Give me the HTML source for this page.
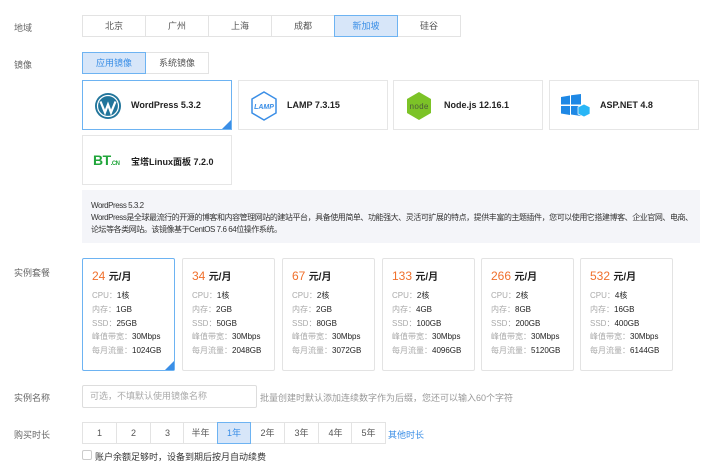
<!DOCTYPE html>
<html><head><meta charset="utf-8"><style>
*{box-sizing:border-box;margin:0;padding:0}
body{width:720px;height:466px;background:#fff;font-family:"Liberation Sans","Noto Sans CJK SC",sans-serif;font-size:9px;color:#333;position:relative;overflow:hidden}
.a{position:absolute}
.lbl{position:absolute;left:14px;color:#666;font-size:9px}
.btn{position:absolute;height:22px;border:1px solid #e3e3e3;background:#fff;text-align:center;line-height:20px;color:#555;font-size:9px}
.sel{background:#d7e6f9;border-color:#6db3f2;color:#3a8ee6;z-index:2}
.card{position:absolute;height:50px;width:150px;border:1px solid #e6e6e6;background:#fff}
.card b{position:absolute;left:48px;top:19px;font-size:9px;color:#222}
.plan{position:absolute;top:258px;width:93px;height:113px;border:1px solid #e3e3e3;border-radius:2px}
.plan .p{position:absolute;left:9px;top:9px;font-size:12px;color:#f0702c}
.plan .p span{font-size:10px;color:#222;font-weight:bold}
.plan .r{position:absolute;left:9px;font-size:8px;color:#222}
.plan .r i{font-style:normal;color:#aaa}
.corner{position:absolute;right:0;bottom:0;width:0;height:0;border-left:9px solid transparent;border-bottom:9px solid #3a8ee6}
</style></head><body>
<div class="lbl" style="top:21px">地域</div>
<div class="btn" style="left:82px;top:15px;width:64px">北京</div>
<div class="btn" style="left:145px;top:15px;width:64px">广州</div>
<div class="btn" style="left:208px;top:15px;width:64px">上海</div>
<div class="btn" style="left:271px;top:15px;width:64px">成都</div>
<div class="btn sel" style="left:334px;top:15px;width:64px">新加坡</div>
<div class="btn" style="left:397px;top:15px;width:64px">硅谷</div>

<div class="lbl" style="top:58px">镜像</div>
<div class="btn sel" style="left:82px;top:52px;width:64px">应用镜像</div>
<div class="btn" style="left:145px;top:52px;width:64px">系统镜像</div>

<div class="card" style="left:82px;top:80px;border-color:#6db3f2">
<svg class="a" style="left:11px;top:11px" width="28" height="28" viewBox="0 0 28 28"><circle cx="14" cy="14" r="13" fill="#21759b"/><circle cx="14" cy="14" r="10.5" fill="none" stroke="#fff" stroke-width="1.2"/><path d="M6.5 9.5l4.5 11 3-8 3 8 4.5-11" fill="none" stroke="#fff" stroke-width="2.2"/></svg>
<b>WordPress 5.3.2</b><div class="corner"></div></div>
<div class="card" style="left:238px;top:80px">
<svg class="a" style="left:11px;top:10px" width="28" height="30" viewBox="0 0 28 30"><path d="M14 1l12 7v14l-12 7-12-7V8z" fill="none" stroke="#3a8ee6" stroke-width="1.5"/><text x="14" y="18" font-size="7" font-style="italic" font-weight="bold" fill="#3a8ee6" text-anchor="middle" font-family="Liberation Sans">LAMP</text></svg>
<b>LAMP 7.3.15</b></div>
<div class="card" style="left:393px;top:80px">
<svg class="a" style="left:12px;top:10px" width="26" height="30" viewBox="0 0 26 30"><path d="M13 1l12 7v14l-12 7-12-7V8z" fill="#7cc327"/><text x="13" y="18" font-size="8" fill="#4a5a3a" text-anchor="middle" font-family="Liberation Mono">node</text></svg>
<b style="left:50px">Node.js 12.16.1</b></div>
<div class="card" style="left:549px;top:80px">
<svg class="a" style="left:10px;top:13px" width="30" height="24" viewBox="0 0 30 24"><path d="M1 3l9-1.5v9H1zM11 1.3L21 0v10.5H11zM1 12h9v9L1 19.5zM11 12h10v10L11 20.5z" fill="#1e88e5"/><path d="M18 13l6-3 6 3v7l-6 3-6-3z" fill="#29b6f6" stroke="#fff" stroke-width=".7"/></svg>
<b style="left:50px">ASP.NET 4.8</b></div>
<div class="card" style="left:82px;top:135px;height:50px">
<div class="a" style="left:10px;top:16px;font-size:14px;color:#20a53a;font-weight:bold;letter-spacing:-0.5px">BT<span style="font-size:6px">.CN</span></div>
<b>宝塔Linux面板 7.2.0</b></div>

<div class="a" style="left:82px;top:190px;width:618px;height:53px;background:#f4f5f9"></div>
<div class="a" style="left:91px;top:200px;font-size:8px;color:#333;line-height:12px;white-space:nowrap;letter-spacing:-0.45px">WordPress 5.3.2<br>WordPress是全球最流行的开源的博客和内容管理网站的建站平台，具备使用简单、功能强大、灵活可扩展的特点，提供丰富的主题插件，您可以使用它搭建博客、企业官网、电商、<br>论坛等各类网站。该镜像基于CentOS 7.6 64位操作系统。</div>

<div class="lbl" style="top:266px">实例套餐</div>

<div class="plan" style="left:82px;border-color:#6db3f2"><div class="p">24 <span>元/月</span></div>
<div class="r" style="top:31px"><i>CPU：</i>1核</div><div class="r" style="top:45px"><i>内存：</i>1GB</div><div class="r" style="top:59px"><i>SSD：</i>25GB</div><div class="r" style="top:72px"><i>峰值带宽：</i>30Mbps</div><div class="r" style="top:86px"><i>每月流量：</i>1024GB</div><div class="corner"></div></div>
<div class="plan" style="left:182px"><div class="p">34 <span>元/月</span></div>
<div class="r" style="top:31px"><i>CPU：</i>1核</div><div class="r" style="top:45px"><i>内存：</i>2GB</div><div class="r" style="top:59px"><i>SSD：</i>50GB</div><div class="r" style="top:72px"><i>峰值带宽：</i>30Mbps</div><div class="r" style="top:86px"><i>每月流量：</i>2048GB</div></div>
<div class="plan" style="left:282px"><div class="p">67 <span>元/月</span></div>
<div class="r" style="top:31px"><i>CPU：</i>2核</div><div class="r" style="top:45px"><i>内存：</i>2GB</div><div class="r" style="top:59px"><i>SSD：</i>80GB</div><div class="r" style="top:72px"><i>峰值带宽：</i>30Mbps</div><div class="r" style="top:86px"><i>每月流量：</i>3072GB</div></div>
<div class="plan" style="left:382px"><div class="p">133 <span>元/月</span></div>
<div class="r" style="top:31px"><i>CPU：</i>2核</div><div class="r" style="top:45px"><i>内存：</i>4GB</div><div class="r" style="top:59px"><i>SSD：</i>100GB</div><div class="r" style="top:72px"><i>峰值带宽：</i>30Mbps</div><div class="r" style="top:86px"><i>每月流量：</i>4096GB</div></div>
<div class="plan" style="left:481px"><div class="p">266 <span>元/月</span></div>
<div class="r" style="top:31px"><i>CPU：</i>2核</div><div class="r" style="top:45px"><i>内存：</i>8GB</div><div class="r" style="top:59px"><i>SSD：</i>200GB</div><div class="r" style="top:72px"><i>峰值带宽：</i>30Mbps</div><div class="r" style="top:86px"><i>每月流量：</i>5120GB</div></div>
<div class="plan" style="left:580px"><div class="p">532 <span>元/月</span></div>
<div class="r" style="top:31px"><i>CPU：</i>4核</div><div class="r" style="top:45px"><i>内存：</i>16GB</div><div class="r" style="top:59px"><i>SSD：</i>400GB</div><div class="r" style="top:72px"><i>峰值带宽：</i>30Mbps</div><div class="r" style="top:86px"><i>每月流量：</i>6144GB</div></div>

<div class="lbl" style="top:391px">实例名称</div>
<div class="a" style="left:82px;top:385px;width:175px;height:23px;border:1px solid #ddd;border-radius:2px;color:#aaa;padding-left:7px;line-height:21px">可选，不填默认使用镜像名称</div>
<div class="a" style="left:260px;top:391px;color:#999">批量创建时默认添加连续数字作为后缀，您还可以输入60个字符</div>

<div class="lbl" style="top:428px">购买时长</div>
<div class="btn" style="left:82px;top:422px;width:35px">1</div>
<div class="btn" style="left:116px;top:422px;width:35px">2</div>
<div class="btn" style="left:150px;top:422px;width:35px">3</div>
<div class="btn" style="left:183px;top:422px;width:35px">半年</div>
<div class="btn sel" style="left:217px;top:422px;width:34px">1年</div>
<div class="btn" style="left:250px;top:422px;width:35px">2年</div>
<div class="btn" style="left:284px;top:422px;width:35px">3年</div>
<div class="btn" style="left:318px;top:422px;width:35px">4年</div>
<div class="btn" style="left:351px;top:422px;width:35px">5年</div>
<div class="a" style="left:388px;top:428px;color:#3a8ee6">其他时长</div>
<div class="a" style="left:82px;top:450px;width:10px;height:10px;border:1px solid #ccc;border-radius:2px"></div>
<div class="a" style="left:95px;top:450px;color:#333">账户余额足够时，设备到期后按月自动续费</div>
</body></html>
